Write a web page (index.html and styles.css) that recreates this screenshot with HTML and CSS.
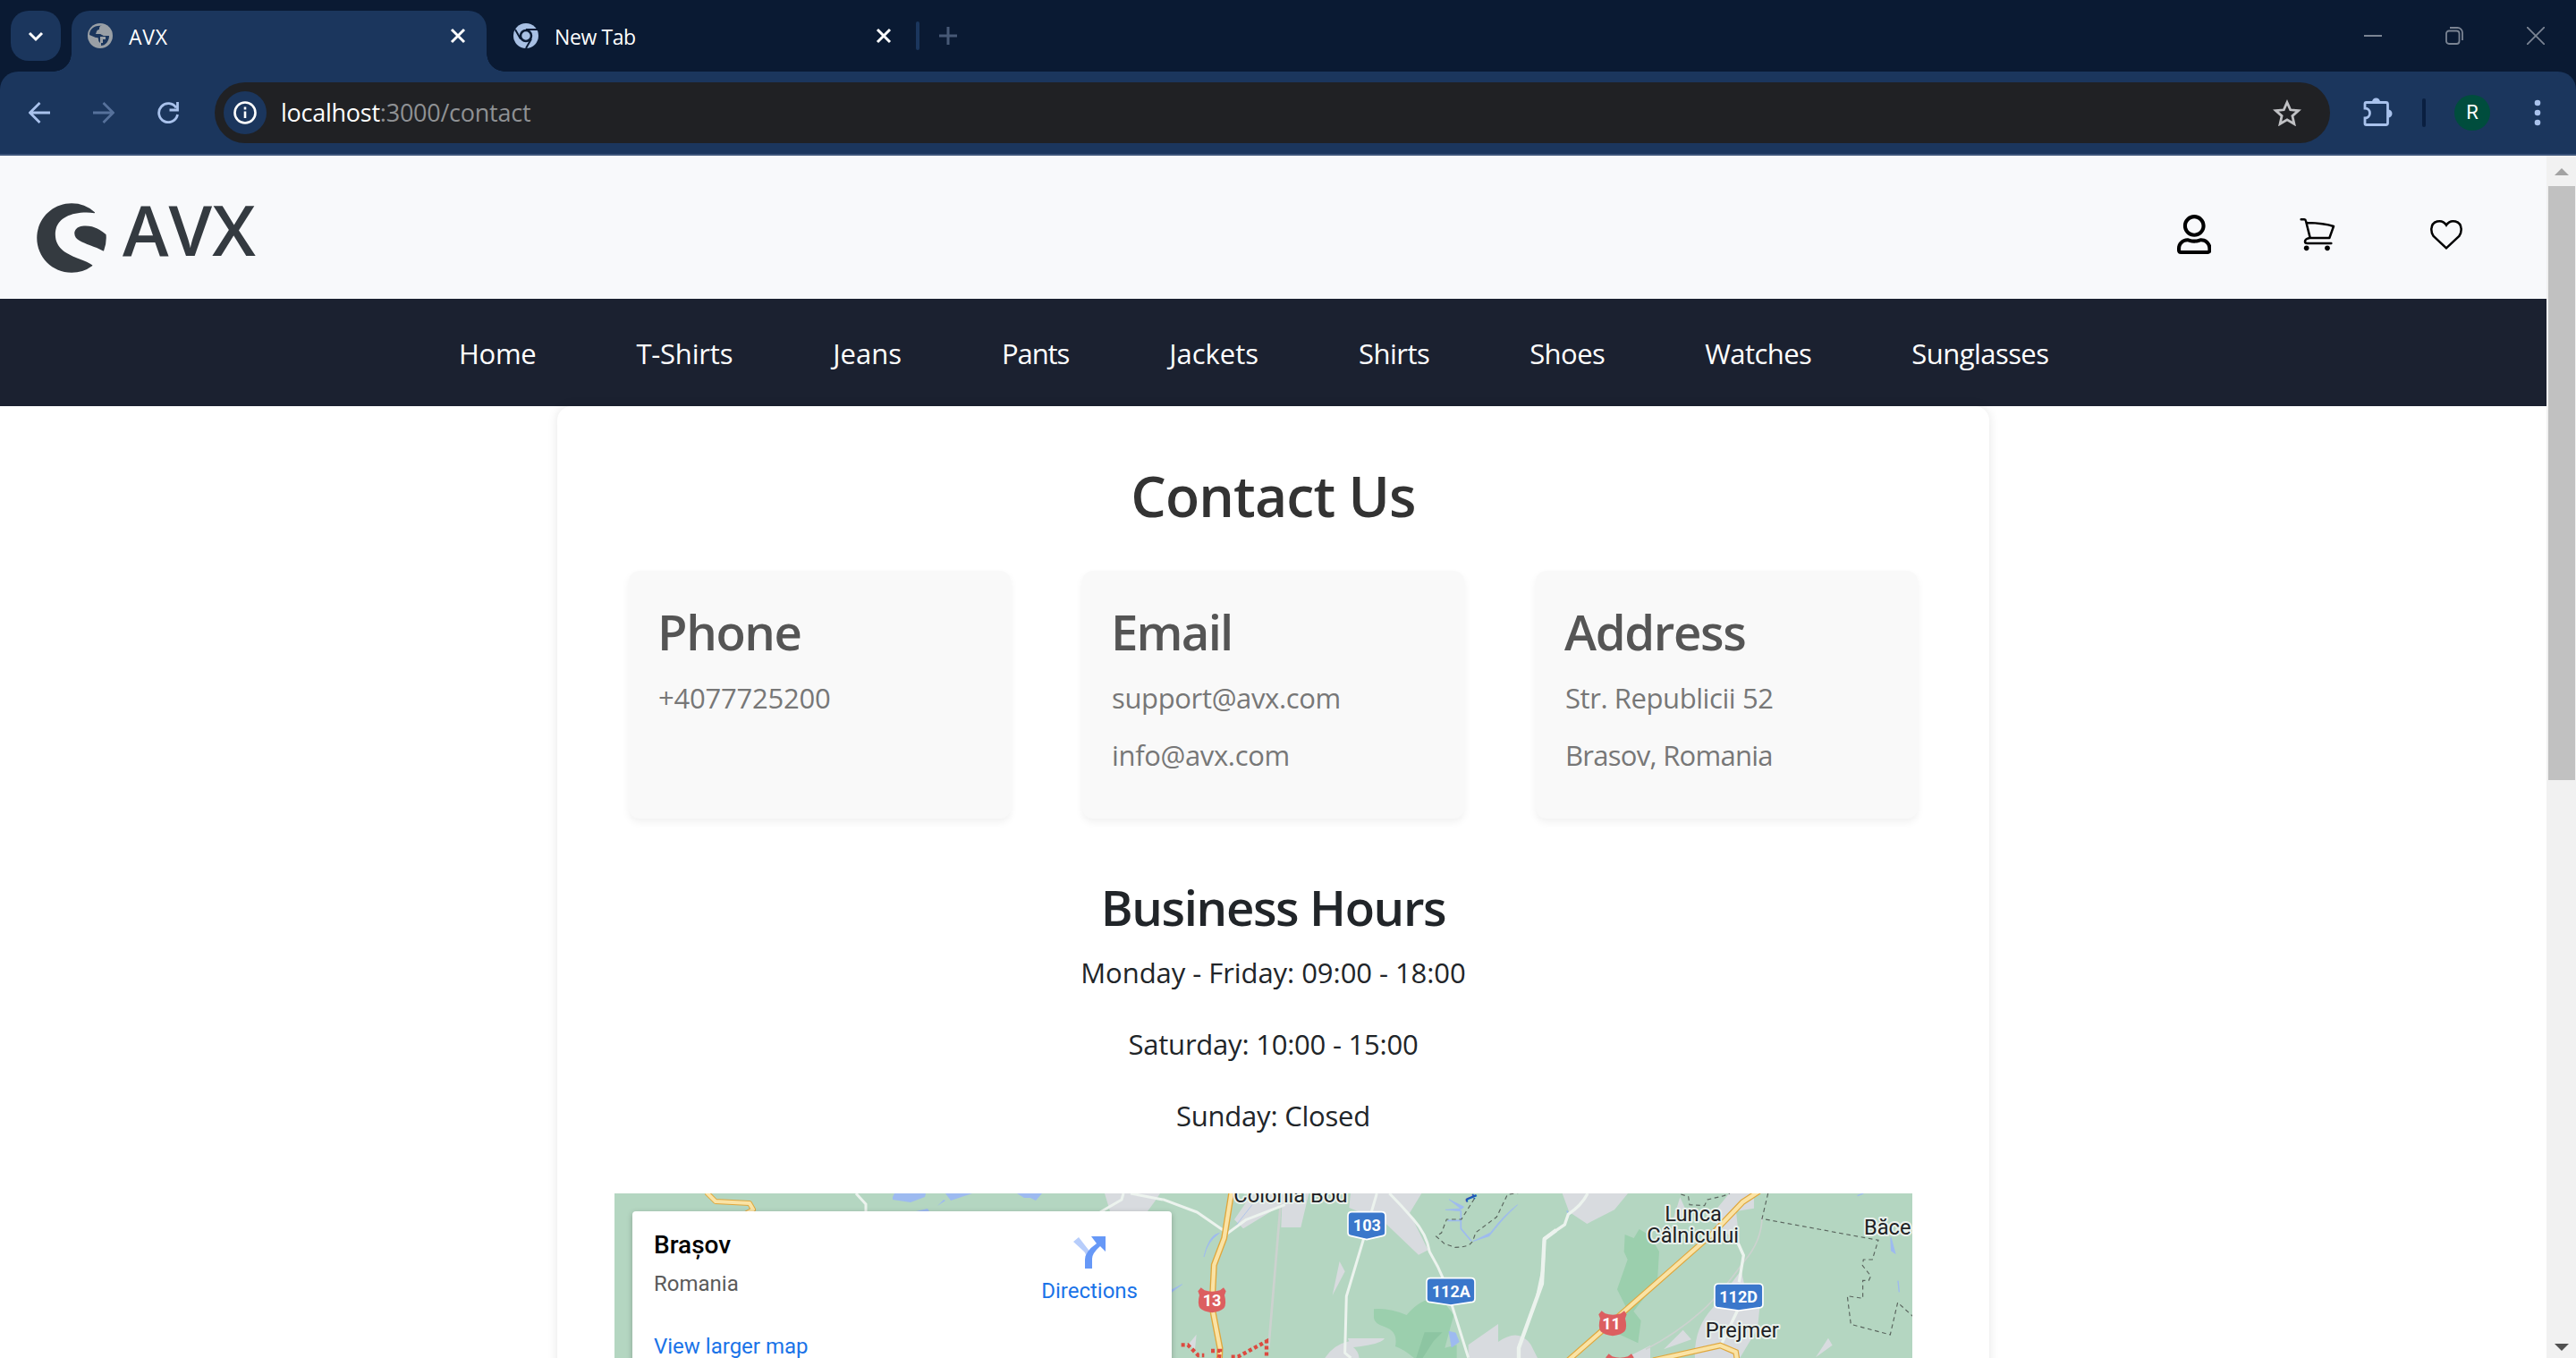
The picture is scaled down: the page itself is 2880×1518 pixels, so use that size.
FILE: index.html
```html
<!DOCTYPE html>
<html lang="en">
<head>
<meta charset="utf-8">
<title>AVX</title>
<link rel="stylesheet" href="styles.css">
</head>
<body>
<div class="browser">
  <div class="tabstrip">
    <button class="tab-search"><svg width="20" height="20" viewBox="0 0 20 20"><path d="M3 7l7 7 7-7" fill="none" stroke="#fff" stroke-width="3"/></svg></button>
    <div class="tab tab-active">
      <svg class="favicon" width="28" height="28" viewBox="0 0 28 28"><circle cx="14" cy="14" r="14" fill="#9aa0a6"/><path d="M16 3c-3 0-3 2-3 4-3 0-3 3-4 5h4c3 0 3 2 6 2h5c0 6-4 11-9 11v-3c-2 0-3-2-3-4s-1-2-3-2l-7-3c0-6 5-11 14-10z" fill="#1b365d"/><path d="M14 3h4v4l-4 3zM14 15h6v3h-3v4h-3z" fill="#9aa0a6"/></svg>
      <span class="tab-title wide">AVX</span>
      <svg class="tab-close" width="18" height="18" viewBox="0 0 18 18"><path d="M2 2l14 14M16 2L2 16" stroke="#fff" stroke-width="3"/></svg>
    </div>
    <div class="tab">
      <svg class="favicon" width="28" height="28" viewBox="0 0 28 28"><circle cx="14" cy="14" r="14" fill="#a8c0e4"/><path d="M14 7h13M8 17.500L2 7M20 17.500L14 28" stroke="#0a1a33" stroke-width="2"/><circle cx="14" cy="14" r="6" fill="#a8c0e4" stroke="#0a1a33" stroke-width="2.500"/></svg>
      <span class="tab-title">New Tab</span>
      <svg class="tab-close" width="18" height="18" viewBox="0 0 18 18"><path d="M2 2l14 14M16 2L2 16" stroke="#fff" stroke-width="3"/></svg>
    </div>
    <i class="tab-divider"></i>
    <svg class="new-tab" width="20" height="20" viewBox="0 0 20 20"><path d="M10 0v20M0 10h20" stroke="#475976" stroke-width="3"/></svg>
    <div class="window-controls">
      <svg width="20" height="20" viewBox="0 0 20 20"><path d="M0 10h20" stroke="#7b8493" stroke-width="2"/></svg>
      <svg width="20" height="20" viewBox="0 0 20 20" fill="none" stroke="#7b8493" stroke-width="1.800"><rect x="1" y="4.500" width="14.500" height="14.500" rx="3"/><path d="M5 1h8.500a5.500 5.500 0 0 1 5.500 5.500V15"/></svg>
      <svg width="20" height="20" viewBox="0 0 20 20"><path d="M0 0l20 20M20 0L0 20" stroke="#7b8493" stroke-width="1.800"/></svg>
    </div>
  </div>

  <div class="toolbar">
    <div class="nav-buttons">
      <svg width="24" height="24" viewBox="0 0 24 24" fill="none" stroke="#a9c2ec" stroke-width="2.800"><path d="M24 12H2M12.500 1L1.500 12l11 11"/></svg>
      <svg width="24" height="24" viewBox="0 0 24 24" fill="none" stroke="#56719b" stroke-width="2.800"><path d="M0 12h22M11.500 1l11 11-11 11"/></svg>
      <svg width="24" height="24" viewBox="0 0 24 24" fill="none" stroke="#a9c2ec" stroke-width="2.800"><path d="M22.500 14A10.500 10.500 0 1 1 21 6.500M22.500 0v9h-9"/></svg>
    </div>
    <div class="address">
      <span class="site-info"><svg width="26" height="26" viewBox="0 0 26 26"><circle cx="13" cy="13" r="11.500" fill="none" stroke="#fff" stroke-width="2.600"/><path d="M13 11.500V19M13 6.500v3" stroke="#fff" stroke-width="2.600"/></svg></span>
      <span class="url"><b>localhost</b><span>:3000/contact</span></span>
      <svg class="star" width="32" height="30" viewBox="0 0 32 30"><path d="M16 3.500l3.700 8.300 9 .8-6.800 6 2 8.900-7.900-4.700-7.900 4.700 2-8.900-6.800-6 9-.8z" fill="none" stroke="#c0c1c4" stroke-width="2.800"/></svg>
    </div>
    <svg class="puzzle" width="33" height="34" viewBox="0 0 33 34"><path d="M3.500 6.500h22a2 2 0 0 1 2 2v21a2 2 0 0 1-2 2h-22a1.500 1.500 0 0 1-1.500-1.500v-6a5.500 5.500 0 0 0 0-11V8a1.500 1.500 0 0 1 1.500-1.500z" fill="none" stroke="#a9c2ec" stroke-width="2.800"/><path d="M10 6a4.500 4.500 0 0 1 9 0zM28 14.500a4.500 4.500 0 0 1 0 9z" fill="#a9c2ec"/></svg>
    <i class="toolbar-divider"></i>
    <span class="avatar">R</span>
    <svg class="menu-dots" width="8" height="30" viewBox="0 0 8 30" fill="#a9c2ec"><circle cx="4" cy="4" r="3.300"/><circle cx="4" cy="15" r="3.300"/><circle cx="4" cy="26" r="3.300"/></svg>
  </div>

  <div class="viewport">
    <div class="page">
      <header class="header">
        <a class="brand">
          <svg width="80" height="80" viewBox="0 0 512 512" fill="#343a40"><path d="M403.500 455.410A246.170 246.170 0 0 1 256 504C118.810 504 8 393 8 256 8 118.810 119 8 256 8a247.390 247.390 0 0 1 165.700 63.500 3.570 3.570 0 0 1-2.860 6.180A418.620 418.620 0 0 0 362.130 74c-129.360 0-222.400 53.470-222.400 155.350 0 109 92.130 145.880 176.830 178.730 33.640 13 65.400 25.360 87 41.590a3.580 3.580 0 0 1 0 5.720zM503 233.090a3.640 3.640 0 0 0-1.270-2.440c-51.760-43-93.620-60.480-144.480-60.480-84.130 0-80.250 52.170-80.250 53.630 0 42.600 52.060 62 112.340 84.490 31.070 11.590 63.190 23.570 92.680 39.930a3.570 3.570 0 0 0 5-1.820A249 249 0 0 0 503 233.090z"/></svg>
          <span class="brand-name">AVX</span>
        </a>
        <div class="actions">
          <svg width="38.500" height="44" viewBox="0 0 448 512"><path d="M313.600 304c-28.700 0-42.500 16-89.600 16-47.100 0-60.800-16-89.600-16C60.200 304 0 364.200 0 438.400V464c0 26.500 21.500 48 48 48h352c26.500 0 48-21.500 48-48v-25.600c0-74.200-60.200-134.400-134.400-134.400zM400 464H48v-25.600c0-47.600 38.800-86.400 86.400-86.400 14.600 0 38.300 16 89.600 16 51.700 0 74.900-16 89.600-16 47.600 0 86.400 38.800 86.400 86.400V464zM224 288c79.500 0 144-64.500 144-144S303.500 0 224 0 80 64.500 80 144s64.500 144 144 144zm0-240c52.900 0 96 43.100 96 96s-43.100 96-96 96-96-43.100-96-96 43.100-96 96-96z"/></svg>
          <svg width="40" height="38" viewBox="513 729 120 114"><path d="M518 736h11q4 0 5 5l14 56M538 747q58 1 89 12l-14 39h-66q-16 3-16 12 0 6 8 6h80" fill="none" stroke="#000" stroke-width="7.500" stroke-linecap="round" stroke-linejoin="round"/><circle cx="536" cy="832" r="8.500"/><circle cx="606" cy="832" r="8.500"/></svg>
          <svg width="38" height="35" viewBox="948 733 114 105"><path d="M1005 830L962 790Q955 780 955 768C955 738 990 730 1005 753C1020 730 1055 738 1055 768Q1055 780 1048 790Z" fill="none" stroke="#000" stroke-width="7.500"/></svg>
        </div>
      </header>
      <nav class="nav">
        <a>Home</a><a>T-Shirts</a><a>Jeans</a><a>Pants</a><a>Jackets</a><a>Shirts</a><a>Shoes</a><a>Watches</a><a>Sunglasses</a>
      </nav>
      <main class="contact">
        <h1>Contact Us</h1>
        <div class="cards">
          <section class="card phone"><h2>Phone</h2><p>+4077725200</p></section>
          <section class="card email"><h2>Email</h2><p>support@avx.com</p><p>info@avx.com</p></section>
          <section class="card address-card"><h2>Address</h2><p>Str. Republicii 52</p><p class="city">Brasov, Romania</p></section>
        </div>
        <section class="hours">
          <h2>Business Hours</h2>
          <p class="weekdays">Monday - Friday: 09:00 - 18:00</p>
          <p>Saturday: 10:00 - 15:00</p>
          <p>Sunday: Closed</p>
        </section>
        <div class="map">
          <svg class="map-canvas" width="1451" height="184" viewBox="687 1334 1451 184">
            <rect x="687" y="1334" width="1451" height="184" fill="#b4d6c1"/>
            <g fill="#9dbaf0"><path d="M998 1338l2-4h35l-1 4-16 6-20-3zM1057 1334h30l-24 8zM1048 1348l7-7 2 1zM1137 1334h28l-7 8-6-3h-7zM1024 1354l13-3 2 3z"/></g>
            <path d="M1235 1334h62l-6 9-8 11h-42z" fill="#d8dbdf"/>
            <path d="M957 1334l11 12v10M1230 1355l24-14 2-7M1264 1334l36 7" fill="none" stroke="#ecf3ee" stroke-width="3"/>
            <g fill="none" stroke-linejoin="round"><path d="M790 1333l10 10 38 2 4 7-9 5" stroke="#e0a73c" stroke-width="6"/><path d="M790 1333l10 10 38 2 4 7-9 5" stroke="#fae3a5" stroke-width="4"/></g>
            <g transform="translate(1300 1320) scale(.3333)">
              <path d="M240 130L300 42H490L463 156H397L400 80 270 160zM630 42H868L828 108 890 232 858 248 745 140 625 90zM593 270l18 34-42 80zM620 528h124q-10 20-105 30 20 15 20 42H540q30-50 85-62zM1025 600v-50l100-70v60q70-50 110 10l25 50zM85 550l28-35-5 50z" fill="#d8dbdf"/>
              <path d="M708 430q50-5 110 20 60-70 120-50l38 50-30 110 40-10v50H850q-40-35-70-45 10-50-35-65-35-10-37-30z" fill="#9bcfad"/><path d="M878 508h60l-30 30-40 62h-20z" fill="#8dc5a2"/>
              <path d="M395 80L355 560" fill="none" stroke="#ccd2cf" stroke-width="8"/>
              <path d="M190 175q-35 5-52 80 10-50 52-80zM30 365l35-18-35 26zM960 62l50 25-8 8zM948 97l50-4v8zM960 505l22 5 12 30-25 18zM1190 80q-50 45-95 105l-55 18 60-30q45-60 90-93zM300 80l-55 70" fill="#9dbaf0" stroke="#9dbaf0" stroke-width="2"/>
              <path d="M1000 100v60l35 42M1000 133h-45" fill="none" stroke="#9dbaf0" stroke-width="5"/>
              <g fill="none" stroke="#ecf3ee" stroke-width="9" stroke-linejoin="round"><path d="M0 62l115 43 88 61M205 185l75-55 130-50M718 42l-45 155-57 190-5 190 20 17M760 42q40 40 80 86 45 50 55 110 30 50 50 100l80 255"/><path d="M1320 165l-40 30-8 150-78 215v35" stroke-width="13"/></g>
              <path d="M230 42l-24 150-34 90-7 140 27 140-2 40" fill="none" stroke="#e0a73c" stroke-width="21"/><path d="M230 42l-24 150-34 90-7 140 27 140-2 40" fill="none" stroke="#fae3a5" stroke-width="13"/>
              <path d="M1045 60l-38 60-5 9h-50l-17 45-18 12 28 25 35 12q50 0 60-22l10-28 70-52 36-75 40-6" fill="none" stroke="#59645d" stroke-width="3.500" stroke-dasharray="14 11"/>
              <path d="M62 550h22l35 35h20M162 570h30l-4 30M230 590h22l96-52v60" fill="none" stroke="#dc4a40" stroke-width="13" stroke-dasharray="12 9"/>
              <text x="0" y="0" transform="translate(1012 55) rotate(68)" class="river">t</text>
              <text x="238" y="71" class="place">Colonia Bod</text>
            </g>
            <g transform="translate(1720 1320) scale(.3333)">
              <path d="M80 42H300l-45 55-92 47-60-40zM640 42h83v50l-60 10 12 110-60-50-40 -40zM475 55l25 55-50 25zM680 300l10 45h60l-15 150-60 100h-150q-5-100 60-170zM420 565l65-65 28 32zM300 590l75-38v48h-80zM930 592l42-65 14 24z" fill="#d8dbdf"/>
              <path d="M290 180l30 12 18-30 35 20 32 55-6 100-80 100 25 32-10 75-65-30 25-90-30-60 35-100-12-26z" fill="#9bcfad"/>
              <path d="M95 100l10 15M1182 190l14 52-12-8zM1206 335l4 38zM1070 50l20-8" fill="#9dbaf0" stroke="#9dbaf0" stroke-width="4"/>
              <path d="M750 120q0 80-60 150-80 110-140 165-90 80-190 130" fill="none" stroke="#ccd2cf" stroke-width="5"/>
              <path d="M165 42q-20 40-65 70l-12 35-68 46-5 105-18 85M670 210l18 40-15 90M670 430l-55 115" fill="none" stroke="#ecf3ee" stroke-width="10"/>
              <path d="M740 35l-55 36-100 105-290 255L100 602M385 602l225-50 52 22 5 30" fill="none" stroke="#e0a73c" stroke-width="20"/><path d="M740 35l-55 36-100 105-290 255L100 602M385 602l225-50 52 22 5 30" fill="none" stroke="#fae3a5" stroke-width="13"/>
              <path d="M478 45l25 8 4 27 50 3 10-20 55-13 20-8M770 42l-20 85 390 72-20 65h-30l-3 20 28 35-7 15h-20v60l-52-8 12 95 132 35 25-108 55 50" fill="none" stroke="#59645d" stroke-width="3.500" stroke-dasharray="14 11"/>
              <text x="424" y="134" class="place">Lunca</text><text x="364" y="206" class="place">Câlnicului</text>
              <text x="560" y="526" class="place">Prejmer</text><text x="1092" y="180" class="place">Băce</text>
            </g>
            <g transform="translate(1300 1320) scale(.3333)">
              <path id="shield" d="M128 358l12 9q25 8 52 0l12-9 8 12-5 13q8 30-2 44-12 12-40 15-28-3-40-15-10-15-2-44l-5-13z" fill="#dc5f60"/>
              <use href="#shield" x="1344" y="78"/><use href="#shield" x="1368" y="222"/>
              <g fill="#3a77cb" stroke="#fff" stroke-width="5"><path d="M634 104h100q13 0 13 13v56q0 9-8 11l-55 13-55-13q-8-2-8-11v-56q0-13 13-13zM898 326h136q13 0 13 13v56q0 9-8 11l-73 11-73-11q-8-2-8-11v-56q0-13 13-13zM1864 345h136q13 0 13 13v56q0 9-8 11l-73 10-73-10q-8-2-8-11v-56q0-13 13-13z"/></g>
              <g class="road"><text x="165" y="420">13</text><text x="1505" y="499">11</text><text x="685" y="168">103</text><text x="967" y="390">112A</text><text x="1931" y="408">112D</text></g>
            </g>
          </svg>
          <div class="place-card">
            <div class="place-text"><strong>Brașov</strong><span class="muted">Romania</span><a class="larger">View larger map</a></div>
            <a class="directions">
              <svg width="36" height="36" viewBox="0 0 36 36"><path d="M6 1l14 18-5 6q-1-6-3-8L0 6z" fill="#b7cdfb"/><path d="M13 36V26q0-9 13-18l-6-8h16v17l-6-6q-9 8-9 14v11z" fill="#6698f7"/></svg>
              <span>Directions</span>
            </a>
          </div>
        </div>
      </main>
    </div>
    <div class="scrollbar">
      <svg width="16" height="8" viewBox="0 0 16 8"><path d="M0 8l8-8 8 8z" fill="#a3a3a3"/></svg>
      <i class="thumb"></i>
      <svg class="down" width="16" height="8" viewBox="0 0 16 8"><path d="M0 0l8 8 8-8z" fill="#505050"/></svg>
    </div>
  </div>
</div>
</body>
</html>
```
FILE: styles.css
```css
* { box-sizing: border-box; }
body { margin: 0; background: #fff; font-family: "Open Sans", "Noto Sans", sans-serif; overflow: hidden; }
h1, h2, p { margin: 0; }
svg { display: block; flex: none; }
.browser { width: 2880px; height: 1518px; display: flex; flex-direction: column; background: #0a1a33; overflow: hidden; }

.tabstrip { height: 80px; display: flex; padding: 12px 0 0 12px; flex: none; }
.tab-search { width: 56px; height: 56px; border: 0; border-radius: 20px; background: #1b365d; display: flex; align-items: center; justify-content: center; margin-right: 12px; padding: 0; }
.tab { position: relative; display: flex; align-items: center; height: 68px; width: 464px; padding: 0 23px 12px 18px; border-radius: 20px 20px 0 0; }
.tab + .tab { width: 476px; padding-left: 30px; }
.tab-active { background: #1b365d; }
.tab-active::before, .tab-active::after { content: ""; position: absolute; bottom: 0; width: 20px; height: 20px; }
.tab-active::before { left: -20px; background: radial-gradient(circle at 0 0, transparent 19.5px, #1b365d 20px); }
.tab-active::after { right: -20px; background: radial-gradient(circle at 100% 0, transparent 19.5px, #1b365d 20px); }
.tab-title { color: #fff; font-size: 23px; line-height: 32px; margin: 2px 0 0 18px; letter-spacing: -.4px; }
.tab-title.wide { letter-spacing: .8px; }
.tab-close { margin-left: auto; }
.tab-divider { width: 4px; height: 32px; margin: 12px 22px 0 4px; background: #1b365d; border-radius: 2px; }
.new-tab { margin-top: 18px; }
.window-controls { display: flex; gap: 71px; margin: 18px 35px 0 auto; }

.toolbar { height: 94px; flex: none; display: flex; align-items: center; background: #1b365d; border-bottom: 2px solid #3d557a; border-radius: 20px 20px 0 0; padding: 0 39px 0 32px; }
.nav-buttons { display: flex; gap: 48px; width: 208px; }
.address { width: 2365px; height: 68px; border-radius: 34px; background: #202124; display: flex; align-items: center; padding: 0 32px 0 10px; }
.site-info { width: 48px; height: 48px; border-radius: 50%; background: #1b365d; display: flex; align-items: center; justify-content: center; }
.url { margin-left: 16px; font-size: 27px; line-height: 40px; letter-spacing: -.25px; color: #8f9194; white-space: nowrap; }
.url b { font-weight: 400; color: #fff; }
.star { margin-left: auto; }
.puzzle { margin: -2px 0 0 37px; }
.toolbar-divider { width: 4px; height: 32px; margin-left: 33px; background: #0a1f40; border-radius: 2px; }
.avatar { width: 40px; height: 40px; margin-left: 32px; border-radius: 50%; background: #004d3d; color: #fff; font: 22px/40px Roboto, sans-serif; text-align: center; }
.menu-dots { margin-left: auto; }

.viewport { flex: 1; display: flex; min-height: 0; background: #fff; }
.page { width: 2847px; overflow: hidden; }
.header { height: 160px; background: #f8f9fb; display: flex; justify-content: space-between; padding: 0 93px 0 40px; }
.brand { display: flex; color: #343a40; }
.brand svg { margin-top: 52px; }
.brand-name { font-size: 78px; font-weight: 600; line-height: 100px; margin: 32px 0 0 17px; }
.actions { display: flex; align-items: center; height: 176px; gap: 99px; }
.actions svg:last-child { margin-left: 6px; }
.nav { height: 120px; background: #1b2130; color: #fff; display: flex; gap: 112px; padding: 1px 0 0 513px; font-size: 31px; line-height: 120px; white-space: nowrap; }
.nav a:nth-child(1) { letter-spacing: -.3px; }
.nav a:nth-child(2) { letter-spacing: -.2px; }
.nav a:nth-child(4) { letter-spacing: -1.1px; }
.nav a:nth-child(n+6) { letter-spacing: -.55px; }
.contact { width: 1601px; height: 1200px; margin: 0 auto; padding-top: 62px; border-radius: 16px; box-shadow: 0 0 12px rgba(0, 0, 0, .1); }
h1 { font-size: 62.5px; line-height: 76px; font-weight: 600; letter-spacing: -.9px; color: #333; text-align: center; }
h2 { font-size: 54.5px; line-height: 68px; font-weight: 600; letter-spacing: -1.35px; }
p { font-size: 31px; line-height: 48px; letter-spacing: -.22px; white-space: nowrap; }
.cards { display: grid; grid-template-columns: repeat(3, 427px); gap: 80px; margin: 46px 80px 0; height: 277px; }
.card { background: #f9f9f9; border-radius: 12px; box-shadow: 0 4px 8px rgba(0, 0, 0, .06); padding: 34px 33px; display: flex; flex-direction: column; gap: 16px; color: #777; }
.card h2 { color: #555; margin-left: -1px; }
.email h2 { letter-spacing: -1.8px; }
.email p { letter-spacing: -.35px; }
.address-card p { letter-spacing: -.42px; }
.address-card .city { letter-spacing: -.72px; }
.hours { margin-top: 65px; display: flex; flex-direction: column; align-items: center; gap: 32px; color: #212529; }
.hours h2 { margin-bottom: -17px; }
.hours .weekdays { letter-spacing: -.05px; }

.map { position: relative; width: 1451px; height: 184px; margin: 63px 0 0 64px; overflow: hidden; font-family: Roboto, sans-serif; }
.place { font: 71px Roboto, sans-serif; fill: #202124; stroke: #e9f1ec; stroke-width: 12px; paint-order: stroke; stroke-linejoin: round; }
.river { font: 500 60px Roboto, sans-serif; fill: #1c58b7; }
.road { font: 700 54px Roboto, sans-serif; fill: #fff; text-anchor: middle; }
.place-card { position: absolute; left: 20px; top: 20px; width: 603px; height: 190px; background: #fff; border-radius: 4px; box-shadow: 0 2px 6px rgba(0, 0, 0, .25); display: flex; justify-content: space-between; padding: 0 38px 0 24px; }
.place-text { display: flex; flex-direction: column; font-size: 24px; line-height: 32px; }
.place-text strong { font-size: 28px; font-weight: 500; color: #000; margin-top: 22px; }
.muted { color: #5b5b5b; margin-top: 11px; }
.larger { color: #1a73e8; margin-top: 38px; }
.directions { display: flex; flex-direction: column; align-items: center; gap: 9px; padding-top: 28px; font-size: 24px; line-height: 32px; color: #1a73e8; }

.scrollbar { width: 33px; background: #f1f1f1; display: flex; flex-direction: column; align-items: center; padding: 14px 0 8px; }
.thumb { width: 30px; height: 664px; margin-top: 12px; background: #c1c1c1; }
.down { margin-top: auto; }
```
